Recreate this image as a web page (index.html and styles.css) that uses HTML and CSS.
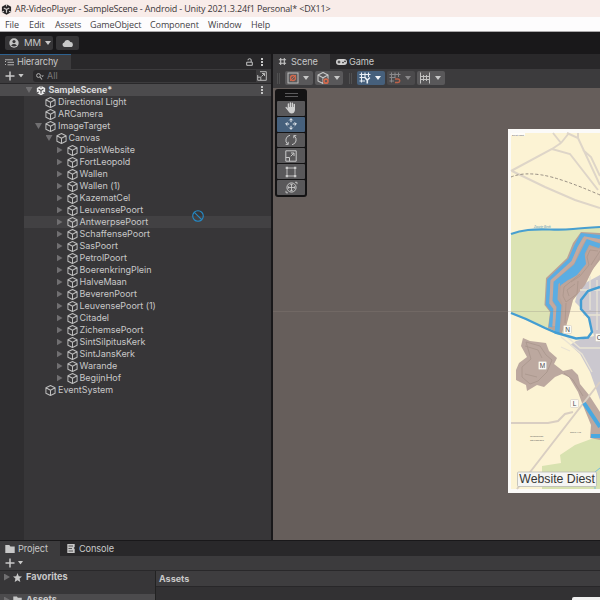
FILE: index.html
```html
<!DOCTYPE html>
<html lang="en">
<head>
<meta charset="utf-8">
<title>AR-VideoPlayer</title>
<link rel="stylesheet" href="styles.css">
</head>
<body>
<svg class="defs" width="0" height="0">
  <symbol id="cube" viewBox="0 0 12 12"><path d="M6 .6 11 3V9L6 11.5 1 9V3ZM1 3 6 5.7 11 3M6 5.7V11.500" fill="none" stroke="currentColor" stroke-width="1.1" stroke-linejoin="round"/></symbol>
  <symbol id="down" viewBox="0 0 6 4"><path d="M0 0H6L3 4Z" fill="currentColor"/></symbol>
  <symbol id="plus" viewBox="0 0 10 10"><path d="M5 .5V9.5M.5 5H9.5" stroke="currentColor" stroke-width="1.5"/></symbol>
  <symbol id="folder" viewBox="0 0 10 8"><path d="M.3 0H4.3L5.4 1.6H9.7V8H.3Z" fill="currentColor"/></symbol>
  <symbol id="dots" viewBox="0 0 2 8"><path d="M0 0H2V2H0ZM0 3H2V5H0ZM0 6H2V8H0Z" fill="currentColor"/></symbol>
  <symbol id="grid" viewBox="0 0 10 10"><path d="M3 1V9M7 1V9M1 3H9M1 7H9" stroke="currentColor" fill="none" stroke-width="1.2"/></symbol>
  <symbol id="unity" viewBox="0 0 12 12"><path d="M6 .2 11 3.1V8.9L6 11.8 1 8.9V3.1Z" fill="currentColor"/><path d="M6 6V9.500M6 6 3 4.300M6 6 9 4.300" class="unity-cut"/><path d="M6 0V2.6M1 9 3.2 7.8M11 9 8.8 7.8" class="unity-cut"/></symbol>
</svg>

<header class="titlebar"><svg class="app-icon" viewBox="0 0 12 12"><use href="#unity"/></svg><span class="title-text">AR-VideoPlayer - SampleScene - Android - Unity 2021.3.24f1 Personal* &lt;DX11&gt;</span></header>
<nav class="menubar"><span>File</span><span>Edit</span><span>Assets</span><span>GameObject</span><span>Component</span><span>Window</span><span>Help</span></nav>
<div class="topbar">
  <div class="account"><svg width="10" height="10" viewBox="0 0 10 10"><circle cx="5" cy="5" r="4.7" fill="#c4c4c4"/><circle cx="5" cy="3.6" r="1.6" fill="#363537"/><path d="M2 7.4Q5 4.6 8 7.4Q5 9.6 2 7.4" fill="#363537"/></svg><span>MM</span><svg width="6" height="4"><use href="#down"/></svg></div>
  <div class="cloud"><svg width="11" height="8" viewBox="0 0 11 8"><path d="M2.5 8A2.3 2.3 0 0 1 2.2 3.5 3.2 3.2 0 0 1 8.3 3 2.5 2.5 0 0 1 8.5 8Z" fill="#c8c8c8"/></svg></div>
</div>

<main class="workspace">
  <section class="hierarchy">
    <div class="tabs">
      <div class="tab tab-focus"><svg width="9" height="7" viewBox="0 0 9 7"><path d="M0 .8H8M2.5 3.3H9M2.5 5.8H9M.5 2V3M.5 5V6" stroke="#c4c4c4" stroke-width=".9"/></svg><span>Hierarchy</span></div>
      <div class="tab-tools"><svg width="7" height="8" viewBox="0 0 7 8"><path d="M.7 4.2H6.3V7.3H.7ZM2 2.3V2Q2 .7 3.6 .7T5.2 2V4" fill="none" stroke="#c4c4c4"/></svg><svg class="dots" width="2" height="8"><use href="#dots"/></svg></div>
    </div>
    <div class="hier-toolbar">
      <svg width="10" height="10"><use href="#plus"/></svg><svg class="arrow" width="6" height="3.5"><use href="#down"/></svg>
      <div class="search"><svg width="8" height="7" viewBox="0 0 8 7"><circle cx="2.5" cy="2.5" r="1.9" fill="none" stroke="#b4b4b4"/><path d="M4 4 6 6.5" stroke="#b4b4b4" stroke-width="1.1"/><path d="M5 2.5H8L6.5 4Z" fill="#b4b4b4"/></svg><span>All</span></div>
      <svg class="picker" width="10" height="10" viewBox="0 0 10 10"><path d="M3 .7H9.3V9.3H.7V4M.7 6.2H3.8V9.3M4.5 5.5 7.5 2.5M5 2.5H7.5V5" fill="none" stroke="#b8b8b8"/></svg>
    </div>
    <div class="tree" id="tree"></div>
  </section>

  <section class="scene">
    <div class="tabs">
      <div class="tab tab-scene"><svg width="9" height="9"><use href="#grid"/></svg><span>Scene</span></div>
      <div class="tab tab-game"><svg width="11" height="6" viewBox="0 0 11 6"><rect width="11" height="6" rx="3" fill="#d0d0d0"/><path d="M3 1.6V4.4M1.6 3H4.4" stroke="#29282a"/><circle cx="7" cy="3.6" r=".8" fill="#29282a"/><circle cx="9" cy="2.4" r=".8" fill="#29282a"/></svg><span>Game</span></div>
    </div>
    <div class="scene-toolbar">
      <i class="grip"></i>
      <div class="tool"><svg width="12" height="12" viewBox="0 0 12 12"><rect x="1" y="1" width="10" height="10" fill="none" stroke="#bdbdbd"/><circle cx="6" cy="6" r="2.5" fill="none" stroke="#d0694d" stroke-width="1.3"/><path d="M3 9 9 3" stroke="#d0694d"/></svg><svg class="arrow" width="6" height="4"><use href="#down"/></svg></div>
      <div class="tool"><svg width="13" height="13" viewBox="0 0 13 13"><use href="#cube" width="12" height="12"/><circle cx="9" cy="9.2" r="3.2" fill="#59585a"/><circle cx="9" cy="9.2" r="2" fill="none" stroke="#d0694d" stroke-width="1.7"/></svg><svg class="arrow" width="6" height="4"><use href="#down"/></svg></div>
      <i class="grip grip-mid"></i>
      <div class="tool tool-on"><svg width="12" height="12" viewBox="0 0 12 12"><path d="M2.500 .5V10.500M6 .5V5.500M9.500 .5V5M.5 2.500H11.500M.5 5.500H6.500M.5 9H6" stroke="#e8eef4" stroke-width="1.100"/><path d="M6 5.500 8.300 8.200 10.800 5.500M8.300 8V11.500" fill="none" stroke="#e8eef4" stroke-width="1.600"/></svg><svg class="arrow" width="6" height="4"><use href="#down"/></svg></div>
      <div class="tool tool-dim"><svg width="12" height="12" viewBox="0 0 12 12"><path d="M2.500 .5V10.500M6 .5V5.500M9.500 .5V5M.5 2.500H11.500M.5 5.500H6.500M.5 9H5" stroke="#8a898b"/><path d="M6 7H9A1.700 1.700 0 0 1 9 10.500H6" fill="none" stroke="#ba6249" stroke-width="1.500"/></svg><svg class="arrow" width="6" height="4"><use href="#down"/></svg></div>
      <div class="tool"><svg width="12" height="12" viewBox="0 0 12 12"><path d="M1.500 .5V11.500M10.500 .5V11.500M4.500 3V9M7.500 3V9M1.500 4.500H10.500M1.500 7.500H10.500" stroke="#c0c0c0" stroke-width="1"/></svg><svg class="arrow" width="6" height="4"><use href="#down"/></svg></div>
    </div>
    <div class="viewport">
      <div class="palette">
        <div class="palette-grip"></div>
        <div class="pbtn"><svg width="12" height="12" viewBox="0 0 12 12"><path d="M3.4 6V2M5.4 5V.9M7.4 5V1.2M9.3 6V2.5M1.2 5.6 3.8 8.6" stroke="#d0d0d0" stroke-width="1.4" stroke-linecap="round"/><path d="M2.8 5H10V8Q9.4 11.6 6.6 11.6 4.3 11.6 2.8 8Z" fill="#d0d0d0"/></svg></div>
        <div class="pbtn pbtn-on"><svg width="12" height="12" viewBox="0 0 12 12"><path d="M6 .8V4.2M6 7.8V11.2M.8 6H4.2M7.8 6H11.2M4.3 2.4 6 .7 7.7 2.4M4.3 9.6 6 11.3 7.7 9.6M2.4 4.3 .7 6 2.4 7.7M9.6 4.3 11.3 6 9.6 7.7" fill="none" stroke="#f0f3f6"/></svg></div>
        <div class="pbtn"><svg width="12" height="12" viewBox="0 0 12 12"><path d="M5 1.3A5 5 0 0 0 2.8 10.2M.7 10.4H3.2V7.8M7 10.7A5 5 0 0 0 9.2 1.8M11.3 1.6H8.8V4.2" fill="none" stroke="#c8c8c8"/></svg></div>
        <div class="pbtn"><svg width="12" height="12" viewBox="0 0 12 12"><path d="M.8.8H11.2V11.2H.8ZM.8 7.5H4.5V11.2M5.7 6.3 8.8 3.2M6 3H9V6" fill="none" stroke="#c8c8c8"/></svg></div>
        <div class="pbtn"><svg width="12" height="12" viewBox="0 0 12 12"><path d="M2 2H10V10H2Z" fill="none" stroke="#c8c8c8" stroke-width=".9"/><path d="M.7.7H3.1V3.1H.7ZM8.9.7H11.3V3.1H8.9ZM.7 8.9H3.1V11.3H.7ZM8.9 8.9H11.3V11.3H8.9Z" fill="#c8c8c8"/></svg></div>
        <div class="pbtn"><svg width="13" height="13" viewBox="0 0 13 13"><circle cx="6.5" cy="6.5" r="4.6" fill="none" stroke="#c8c8c8"/><path d="M6.5 3V10M3 6.5H10M5.2 4.2 6.5 2.8 7.8 4.2M5.2 8.8 6.5 10.2 7.8 8.8M4.2 5.2 2.8 6.5 4.2 7.8M8.8 5.2 10.2 6.5 8.8 7.8M10 1.3H12V3.2M1 9.8V11.8H3" fill="none" stroke="#c8c8c8" stroke-width=".9"/></svg></div>
      </div>
      <svg class="map" width="92" height="364" viewBox="508 129 92 364">
        <rect x="508" y="129" width="92" height="364" fill="#fbfaf8"/>
        <rect x="511" y="133" width="89" height="356" fill="#fcf3d4"/>
        <path d="M511 234 530 230 560 229 580 228 600 227V268L570 334H556L511 313Z" fill="#dce3b4"/>
        <path d="M542 489H600V437L591 439 575 445 560 455 561 463 542 466Z" fill="#d8e2b0"/>
        <path d="M600 250 585 285 573 300 566 325 562 336 600 345Z" fill="#fcf3d4"/>
        <path d="M600 275 587 282 578 290 575 302 582 309 590 320 594 336 576 341 570 345 580 354 590 372 600 400V378Z" fill="#cbc8cf"/>
        <path d="M553 133 561 143M569 133 561 143M561 143 552 149 511 171M578 133V138M567 133 578 138 600 185M583 150 591 157 600 176M552 149 570 154 598 190M512 171 545 187 575 200 600 208" fill="none" stroke="#ded5c8" stroke-width="2"/>
        <path d="M511 177Q523 172 542 175T600 195" fill="none" stroke="#968d82" stroke-width="1" stroke-dasharray="3 2"/>
        <path d="M511 234Q519 231 528 230T550 229.500 573 229 600 227" fill="none" stroke="#489fd0" stroke-width="2.200"/>
        <path d="M600 233 581 232 573 243 567 258 546 278 544.500 305 550 312 548 328 562 334 569 300 600 260Z" fill="#b8a298"/>
        <path d="M600 237 582 235 576 246 570 260 549 280 547.500 304 552.500 311 550.500 327" fill="none" stroke="#5bade3" stroke-width="3.800"/>
        <path d="M600 241 585 238 579 248 573 262 552 281 551 303 555 308 554 326" fill="none" stroke="#c4a99f" stroke-width="3.200"/>
        <path d="M600 246 588 242 582 254 576 266 556 283 555 300 559 306 557 334" fill="none" stroke="#5bade3" stroke-width="4.800"/>
        <path d="M584 252 587 264 577 276 568 280 560 286 560 280 574 267Z" fill="#5bade3"/>
        <path d="M600 249 589 247 585 256 586 264 577 275 561 285 560 297 563 305 561 330 566 327 573 300 585 285 600 255Z" fill="#bda59b"/>
        <path d="M598 251 590 250 587 257 589 265 580 276 571 282M580 274 564 287 563 296 566 302 577 294 578 281M575 284 567 290 569 296M566 303 565 323M600 251 591 265" fill="none" stroke="#a99388" stroke-width=".7"/>
        <path d="M580 290 600 290M590 276V310M597 280V330M583 315H600M561 337 582 354 592 372M566 336 580 348H600M570 351 561 347" fill="none" stroke="#e9e3d4" stroke-width="1.300"/>
        <path d="M511 313 526 319 545 328 557 333 576 338.500 588 337.500 592 332 589 318 581 309 581 300 588 291 600 287" fill="none" stroke="#439dd3" stroke-width="2.400"/>
        <path d="M523 338 530 341 546 343 549 351 557 358 554 364 563 371 572 369 578 375 580 384 589 395 600 412V440L590 438 591 425 582 403 578 392 569 377 562 374 555 377 544 387 537 385 527 391 526 385 516 380 516 370 519 363 527 357 521 346Z" fill="#bca89f"/>
        <path d="M526 342 540 346 546 355 552 360 547 372 538 381 530 384 522 377 522 367 531 359ZM525 346 538 350 542 358M525 374 537 377M564 373 573 380 583 396" fill="none" stroke="#a8968b" stroke-width=".8"/>
        <path d="M511 423H548L558 421 565 414 573 412M517 489 575 414 600 382" fill="none" stroke="#d9cec2" stroke-width="2"/>
        <path d="M584 403 600 427M591 436H600" stroke="#4aa8e0" stroke-width="4"/>
        <path d="M595 489V472L600 468" stroke="#75bce2" fill="none"/>
        <g class="map-pin"><rect x="563.500" y="325.500" width="8" height="8" rx="1"/><rect x="538.500" y="361.500" width="8" height="8" rx="1"/><rect x="570.500" y="399.500" width="8" height="8" rx="1"/><rect x="595.500" y="333.500" width="8" height="8" rx="1"/></g>
        <g class="map-letter"><text x="567.500" y="332">N</text><text x="542.500" y="368">M</text><text x="574.500" y="406">L</text><text x="599" y="340">C</text></g>
        <rect x="511" y="133" width="14" height="3" fill="#fffdf8"/><text class="map-tiny" x="512" y="135.500">Diest kaart</text>
        <text class="map-river" x="534" y="228">Zwarte Beek</text>
        <text class="map-tiny" x="530" y="437">Toeschende</text><text class="map-tiny" x="530" y="440.500">Steenwegen</text><text class="map-tiny" x="570" y="432.500">Speel Hof</text>
        <rect x="517.500" y="472" width="79" height="14.500" rx="1" fill="#f5f5f3" stroke="#b9b9b2" stroke-width=".8"/>
        <text class="map-button" x="519.300" y="483" textLength="75.500" lengthAdjust="spacingAndGlyphs">Website Diest</text>
      </svg>
      <div class="horizon"></div>
    </div>
  </section>
  <svg class="cursor" width="12" height="12" viewBox="0 0 12 12"><circle cx="6" cy="6" r="5.300" fill="none" stroke="#248bc8" stroke-width="1.100"/><path d="M2.300 2.300 9.700 9.700" stroke="#248bc8" stroke-width="1.100"/></svg>
</main>

<section class="project">
  <div class="tabs">
    <div class="tab tab-project"><svg width="10" height="8"><use href="#folder"/></svg><span>Project</span></div>
    <div class="tab tab-console"><svg width="8" height="9" viewBox="0 0 8 9"><path d="M.3 0H7.700V3L6.700 4 7.700 5V9H.3Z" fill="#c8c8c8"/><path d="M1.500 2H6M1.500 4.500H5M1.500 7H6" stroke="#454446" stroke-width=".9"/></svg><span>Console</span></div>
  </div>
  <div class="project-toolbar"><svg width="10" height="10"><use href="#plus"/></svg><svg class="arrow" width="5" height="3.500"><use href="#down"/></svg></div>
  <div class="project-body">
    <div class="folders">
      <div class="folder-row"><i class="fold"></i><svg width="9" height="9" viewBox="0 0 10 10"><path d="M5 0 6.400 3.500 10 3.800 7.300 6.200 8.100 10 5 8 1.900 10 2.700 6.200 0 3.800 3.600 3.500Z" fill="#c8c8c8"/></svg><span>Favorites</span></div>
      <div class="folder-row folder-selected"><i class="fold"></i><svg width="9" height="8"><use href="#folder"/></svg><span>Assets</span></div>
    </div>
    <div class="assets"><div class="assets-head">Assets</div><div class="popup"></div></div>
  </div>
</section>
<script src="tree.js"></script>
</body>
</html>
```
FILE: styles.css
```css
* { box-sizing: border-box; }
body { margin: 0; width: 600px; height: 600px; overflow: hidden; display: flex; flex-direction: column; background: #19181a; color: #c8c8c8; font: 9px/12px Inter, "Liberation Sans", sans-serif; }
svg { flex: none; display: block; }
.defs { position: absolute; }
span { white-space: nowrap; }
.unity-cut { fill: none; stroke: var(--cut, #4c4b4d); stroke-width: 1.3; }

.titlebar { height: 17px; flex: none; background: #f8ece9; color: #3b3739; display: flex; align-items: center; padding: 1px 0 0 1px; gap: 3px; font: 9px/14px "Open Sans", sans-serif; }
.app-icon { width: 11px; height: 11px; color: #262426; --cut: #d4cfce; }
.title-text { letter-spacing: -.165px; }
.menubar { height: 15px; flex: none; background: #fdfcfd; color: #444246; display: grid; grid-template-columns: 24px 26px 35px 60px 58px 43px 40px; padding-left: 5px; font: 9px/15px "Open Sans", sans-serif; letter-spacing: -.1px; border-bottom: 1px solid #aaa8aa; }
.topbar { height: 22px; flex: none; display: flex; gap: 3px; padding: 4px 0 4px 5px; background: #19181a; }
.account { width: 48px; height: 14px; background: #363537; border-radius: 2px; display: flex; align-items: center; padding-left: 4px; gap: 5px; }
.account span { width: 16px; font-size: 9.5px; }
.cloud { width: 23px; height: 14px; background: #363537; border-radius: 2px; display: grid; place-items: center; }

.workspace { flex: none; height: 486px; display: flex; position: relative; }
.hierarchy { width: 271px; display: flex; flex-direction: column; }
.tabs { height: 15px; flex: none; background: #29282a; display: flex; }
.tab { display: flex; align-items: center; background: #3c3b3d; font-size: 9.2px; }
.tab-focus { width: 71px; padding-left: 5px; gap: 3px; border-top: 1px solid #2d618f; letter-spacing: -.1px; }
.tab-tools { margin-left: auto; display: flex; align-items: center; gap: 8px; padding-right: 8px; }
.hier-toolbar { height: 15px; flex: none; background: #3c3b3d; display: flex; align-items: center; padding-left: 5px; border-bottom: 1px solid #29282a; }
.arrow { margin-left: 3px; }
.search { margin-left: 9px; width: 223px; height: 12px; display: flex; align-items: center; padding-left: 3px; gap: 3px; border-radius: 3px 0 0 3px; background: #2a292b; color: #79787a; }
.picker { margin-left: 1px; }
.tree { flex: 1; background: linear-gradient(90deg, #2f2e30 24px, #373638 24px); }
.row { height: 12px; display: flex; align-items: center; padding-left: calc(24px + var(--indent)); letter-spacing: -.03px; }
.row-hover { background: linear-gradient(90deg, #2f2e30 24px, #424143 24px); }
.row-scene { background: #4c4b4d; font-weight: 700; color: #d8d8d8; letter-spacing: -.15px; }
.row svg { margin-right: 2px; color: #bdbdbd; }
.row-scene svg { color: #eee; margin-right: 3px; }
.row .dots { margin: 0 8px 0 auto; color: #c4c4c4; }
.fold { width: 10px; flex: none; display: block; }
.fold::before { content: ""; display: block; width: 6px; height: 7px; background: #706f71; clip-path: polygon(0 0, 100% 50%, 0 100%); }
.fold-open::before { width: 7px; height: 6px; clip-path: polygon(0 0, 100% 0, 50% 100%); }
.fold-none::before { background: none; }

.scene { width: 327px; margin-left: 2px; display: flex; flex-direction: column; }
.tab-scene { width: 57px; padding-left: 5px; gap: 4px; letter-spacing: -.1px; }
.tab-game { background: transparent; padding-left: 6px; gap: 2px; letter-spacing: -.1px; }
.scene-toolbar { height: 19px; flex: none; background: #3c3b3d; display: flex; align-items: center; padding: 0 0 1px 4px; gap: 2px; }
.grip { width: 3px; height: 11px; margin-right: 3px; border: solid #505051; border-width: 0 1px; }
.grip-mid { margin: 0 3px 0 4px; }
.tool { width: 28px; height: 14px; background: #59585a; border-radius: 2px; display: flex; align-items: center; padding-left: 2px; }
.tool .arrow { margin-left: 4px; }
.tool-on { background: #46607c; color: #f0f3f6; }
.tool-dim { background: #4b4a4c; color: #8a898b; }
.viewport { flex: 1; background: #665e5b; position: relative; }
.palette { position: absolute; left: 2px; top: 1px; width: 32px; height: 108px; background: #141314; border-radius: 3px; padding: 0 2px; display: flex; flex-direction: column; gap: 1px; }
.palette-grip { height: 4px; width: 13px; margin: 4px auto 3px; border: solid #5c5b5d; border-width: 1px 0; }
.pbtn { height: 14.8px; background: #59585a; display: grid; place-items: center; border-radius: 1px; }
.pbtn-on { background: #46607c; }
.map { position: absolute; left: 235px; top: 41px; }
.horizon { position: absolute; left: 0; right: 0; top: 223px; height: 1px; background: rgba(144, 132, 126, .28); }
.map-pin { fill: #fcfaf5; stroke: #cbc4bb; stroke-width: .5; }
.map-letter { font: 6.5px "Liberation Sans", sans-serif; fill: #4a4848; text-anchor: middle; }
.map-tiny { font: 2.5px "Liberation Sans", sans-serif; fill: #555; }
.map-river { font: italic 3px "Liberation Sans", sans-serif; fill: #5a98b4; }
.map-button { font: 12.3px "Liberation Sans", sans-serif; fill: #353535; }
.cursor { position: absolute; left: 192px; top: 156px; }

.project { height: 60px; flex: none; border-top: 1px solid #19181a; display: flex; flex-direction: column; }
.tab-project { width: 60px; padding-left: 5px; gap: 3px; letter-spacing: -.1px; }
.tab-console { background: transparent; padding-left: 7px; gap: 4px; letter-spacing: -.1px; }
.project-toolbar { height: 15px; flex: none; background: #3c3b3d; border-bottom: 1px solid #29282a; display: flex; align-items: center; padding-left: 5px; }
.project-body { height: 29px; flex: none; display: flex; overflow: hidden; }
.folders { width: 156px; background: #373638; border-right: 1px solid #222; font-weight: 700; font-size: 9.2px; }
.folder-row { height: 12px; display: flex; align-items: center; padding-left: 4px; }
.folder-row .fold { width: 9px; }
.folder-row svg { margin-right: 4px; }
.folder-selected { height: 12px; margin-top: 11px; background: #4c4b4d; }
.assets { flex: 1; background: #323133; display: flex; flex-direction: column; }
.assets-head { height: 16px; padding: 2px 3px 0; background: #3e3d3f; border-bottom: 1px solid #282729; font-weight: 700; font-size: 9px; }
.popup { width: 28px; height: 3px; margin: auto 0 0 auto; background: #f0f0f0; border-radius: 2px 0 0 0; }
```
FILE: tree.js
```js
const children = ["DiestWebsite", "FortLeopold", "Wallen", "Wallen (1)", "KazematCel", "LeuvensePoort", "AntwerpsePoort", "SchaffensePoort", "SasPoort", "PetrolPoort", "BoerenkringPlein", "HalveMaan", "BeverenPoort", "LeuvensePoort (1)", "Citadel", "ZichemsePoort", "SintSilpitusKerk", "SintJansKerk", "Warande", "BegijnHof"];
const rows = [
  ["SampleScene*", 1.5, "open"], ["Directional Light", 11, "none"], ["ARCamera", 11, "none"],
  ["ImageTarget", 11, "open"], ["Canvas", 21.5, "open"],
  ...children.map(name => [name, 32.5, "closed"]), ["EventSystem", 11, "none"]
];
document.getElementById("tree").innerHTML = rows.map(([name, indent, fold], i) => {
  const scene = i === 0;
  const cls = scene ? " row-scene" : name === "AntwerpsePoort" ? " row-hover" : "";
  return `<div class="row${cls}" style="--indent:${indent}px"><i class="fold fold-${fold}"></i><svg width="${scene ? 10 : 11}" height="11" viewBox="0 0 12 12"><use href="#${scene ? "unity" : "cube"}"/></svg><span>${name}</span>${scene ? '<svg class="dots" width="2" height="8"><use href="#dots"/></svg>' : ""}</div>`;
}).join("");
```
